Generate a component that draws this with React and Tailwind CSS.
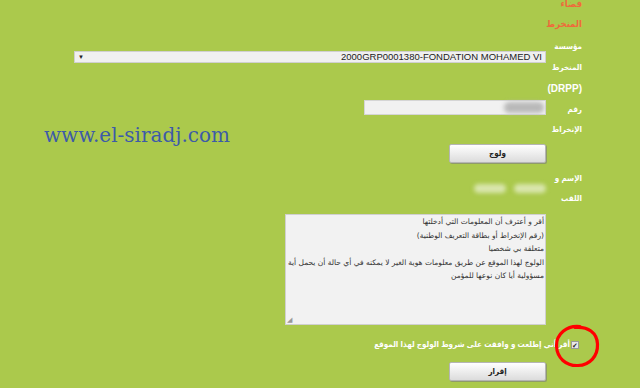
import React from "react";

const fontStack = { fontFamily: '"Liberation Sans", "DejaVu Sans Condensed", "DejaVu Sans", sans-serif' };

function FakeButton({ children }) {
  return (
    <div className="w-[97px] h-[19px] flex items-center justify-center border border-[#b5b5b5] rounded-[2px] bg-gradient-to-b from-[#ffffff] to-[#dcdcdc] shadow-[1px_1px_0_#8f9b6a] text-[8px] font-bold text-[#222]">
      {children}
    </div>
  );
}

export default function App() {
  return (
    <div
      dir="rtl"
      style={fontStack}
      className="relative w-[640px] h-[388px] overflow-hidden bg-[#abc94c] pr-[58px]"
    >
      {/* title */}
      <div className="-mt-[6px] text-[9.5px] leading-[20px] font-bold text-[#ee6b3b]">
        فضاء
        <br />
        المنخرط
      </div>

      {/* DRPP row */}
      <div className="mt-[2px] flex items-start gap-[2px]">
        <div className="w-[34px] shrink-0 text-[8px] leading-[21px] font-bold text-white whitespace-nowrap">
          مؤسسة
          <br />
          المنخرط
          <br />
          <span className="text-[10px]">(DRPP)</span>
        </div>
        <div className="pt-[15px]">
          <div
            dir="ltr"
            className="w-[472px] h-[12px] flex items-center justify-between bg-[#f0f0f0] border border-[#d0d0d0] px-[3px] text-[9.5px] leading-none text-[#222]"
          >
            <span className="text-[6px]">▼</span>
            <span>2000GRP0001380-FONDATION MOHAMED VI</span>
          </div>
        </div>
      </div>

      {/* adherent number */}
      <div className="flex items-start gap-[2px]">
        <div className="w-[34px] shrink-0 text-[8px] leading-[20px] font-bold text-white whitespace-nowrap">
          رقم
          <br />
          الإنخراط
        </div>
        <div className="w-[182px] h-[15px] flex items-center bg-[#f1f1f1] border border-[#d5d5d5] pr-[1px]">
          <div className="w-[40px] h-[11px] rounded-full bg-[#b9b9b9] blur-[2px]"></div>
        </div>
      </div>

      <div className="mt-[4px] flex gap-[2px]">
        <div className="w-[34px] shrink-0"></div>
        <FakeButton>ولوج</FakeButton>
      </div>

      {/* name */}
      <div className="mt-[6px] flex items-start gap-[2px]">
        <div className="w-[34px] shrink-0 text-[8px] leading-[20px] font-bold text-white whitespace-nowrap">
          الإسم و
          <br />
          اللقب
        </div>
        <div className="pt-[15px] flex gap-[8px]">
          <div className="w-[32px] h-[9px] rounded-full bg-[#d9e6ad] blur-[2px]"></div>
          <div className="w-[32px] h-[9px] rounded-full bg-[#d9e6ad] blur-[2px]"></div>
        </div>
      </div>

      {/* terms */}
      <div className="mt-[5px] flex gap-[2px]">
        <div className="w-[34px] shrink-0"></div>
        <div
          className="relative w-[261px] h-[111px] bg-[#f2f2f2] border border-[#d0d0d0] pr-[1px] text-[7.5px] leading-[13.5px] text-[#333] whitespace-nowrap"
          style={{ fontFamily: '"DejaVu Sans", sans-serif' }}
        >
          <div>أقر و أعترف أن المعلومات التي أدخلتها</div>
          <div>(رقم الإنخراط أو بطاقة التعريف الوطنية)</div>
          <div>متعلقة بي شخصيا</div>
          <div>الولوج لهذا الموقع عن طريق معلومات هوية الغير لا يمكنه في أي حالة أن يحمل أية</div>
          <div>مسؤولية أيا كان نوعها للمؤمن</div>
          <span className="absolute left-[1px] bottom-0 text-[7px] leading-none text-[#999]">◢</span>
        </div>
      </div>

      {/* accept */}
      <div className="mt-[12px] flex items-center gap-[1px] pr-[3px] h-[16px]">
        <div className="w-[8px] h-[8px] bg-[#e8e8e8] border border-[#999] flex items-center justify-center text-[7px] leading-none text-[#222]">
          ✔
        </div>
        <span className="text-[8px] font-bold text-white">
          أقر أني إطلعت و وافقت على شروط الولوج لهذا الموقع
        </span>
      </div>

      <div className="mt-[9px] flex gap-[2px]">
        <div className="w-[34px] shrink-0"></div>
        <FakeButton>إقرار</FakeButton>
      </div>

      {/* watermark */}
      <div
        dir="ltr"
        className="absolute left-[44px] top-[123px] text-[20px] leading-[24px] text-[#3d5ba8]"
        style={{ fontFamily: '"DejaVu Serif", serif' }}
      >
        www.el-siradj.com
      </div>

      {/* red hand-drawn circle */}
      <svg className="absolute block left-[553px] top-[323px]" width="48" height="46" viewBox="0 0 48 46">
        <path
          d="M27 3.5 C14 2 3 11 3.5 23 C4 35 13 43 25 42.5 C37 42 45 33 44.5 21 C44 10 35 3 22 4.5"
          fill="none"
          stroke="#ff0000"
          strokeWidth="3.2"
          strokeLinecap="round"
        />
      </svg>
    </div>
  );
}
